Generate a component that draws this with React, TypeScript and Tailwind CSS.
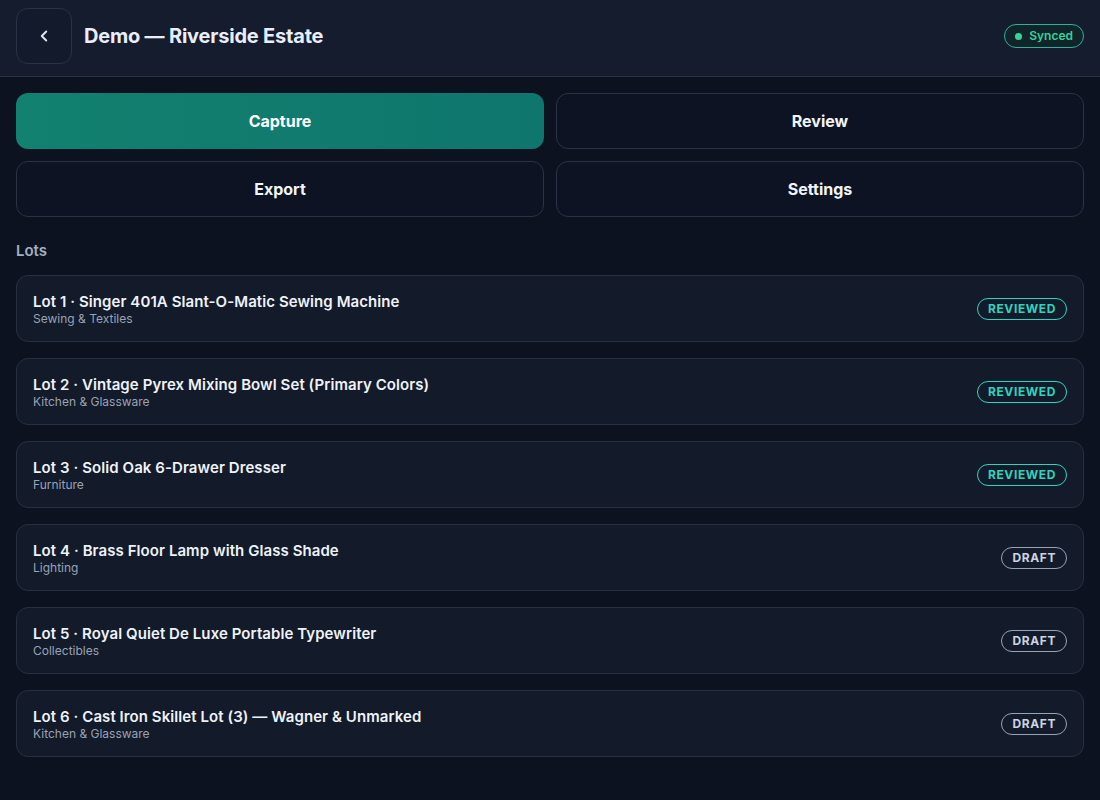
import { ChevronLeft } from "lucide-react";

type Lot = {
  id: number;
  title: string;
  category: string;
  status: "reviewed" | "draft";
};

const lots: Lot[] = [
  { id: 1, title: "Singer 401A Slant-O-Matic Sewing Machine", category: "Sewing & Textiles", status: "reviewed" },
  { id: 2, title: "Vintage Pyrex Mixing Bowl Set (Primary Colors)", category: "Kitchen & Glassware", status: "reviewed" },
  { id: 3, title: "Solid Oak 6-Drawer Dresser", category: "Furniture", status: "reviewed" },
  { id: 4, title: "Brass Floor Lamp with Glass Shade", category: "Lighting", status: "draft" },
  { id: 5, title: "Royal Quiet De Luxe Portable Typewriter", category: "Collectibles", status: "draft" },
  { id: 6, title: "Cast Iron Skillet Lot (3) — Wagner & Unmarked", category: "Kitchen & Glassware", status: "draft" },
];

const tabs = ["Capture", "Review", "Export", "Settings"];

function StatusBadge({ status }: { status: Lot["status"] }) {
  if (status === "reviewed") {
    return (
      <span className="inline-flex items-center h-[22px] px-[10px] rounded-full border border-[#2dd4bf] text-[#2dd4bf] text-[12px] font-bold tracking-[0.05em]">
        REVIEWED
      </span>
    );
  }
  return (
    <span className="inline-flex items-center h-[22px] px-[10px] rounded-full border border-[#94a3b8] text-[#cbd5e1] text-[12px] font-bold tracking-[0.05em]">
      DRAFT
    </span>
  );
}

export default function App() {
  return (
    <div className="min-h-screen bg-[#0c1220] text-[#e2e8f0] font-['Inter','Noto_Sans',sans-serif]">
      <header className="flex items-center justify-between h-[77px] px-4 pb-1 bg-[#151c2e] border-b border-[#2a3345]">
        <div className="flex items-center gap-3">
          <button
            type="button"
            className="w-14 h-14 flex items-center justify-center rounded-xl border border-[#2a3345] bg-[#121a2b] text-[#e2e8f0]"
          >
            <ChevronLeft size={18} strokeWidth={2.5} aria-hidden="true" />
          </button>
          <h1 className="text-[20px] font-bold text-[#e8eefa] tracking-[-0.01em]">Demo — Riverside Estate</h1>
        </div>
        <span className="inline-flex items-center gap-[7px] h-6 px-[10px] rounded-full border border-[#2bb39a] bg-[#10242a] text-[#34d399] text-[12px] font-semibold">
          <span className="w-[7px] h-[7px] rounded-full bg-[#34d399]" />
          Synced
        </span>
      </header>

      <main className="px-4 pt-4 pb-10">
        <div className="grid grid-cols-2 gap-3">
          {tabs.map((t, i) => (
            <button
              key={t}
              type="button"
              className={
                i === 0
                  ? "h-14 rounded-xl bg-gradient-to-r from-[#12816f] to-[#0f766d] text-white text-[16px] font-bold"
                  : "h-14 rounded-xl border border-[#2a3345] bg-[#0d1322] text-[#f1f5f9] text-[16px] font-bold"
              }
            >
              {t}
            </button>
          ))}
        </div>

        <h2 className="mt-[24px] mb-[14px] text-[15px] leading-[20px] font-semibold text-[#a3b0c2]">Lots</h2>

        <div className="flex flex-col gap-4">
          {lots.map((lot) => (
            <div
              key={lot.id}
              className="flex items-center justify-between h-[67px] px-4 rounded-xl border border-[#273043] bg-[#131a2a]"
            >
              <div className="flex flex-col">
                <span className="text-[15px] font-semibold leading-[19px] tracking-[0.005em] text-[#eef2f8]">
                  Lot {lot.id} · {lot.title}
                </span>
                <span className="text-[12px] leading-[15px] text-[#98a3b5]">{lot.category}</span>
              </div>
              <StatusBadge status={lot.status} />
            </div>
          ))}
        </div>
      </main>
    </div>
  );
}
